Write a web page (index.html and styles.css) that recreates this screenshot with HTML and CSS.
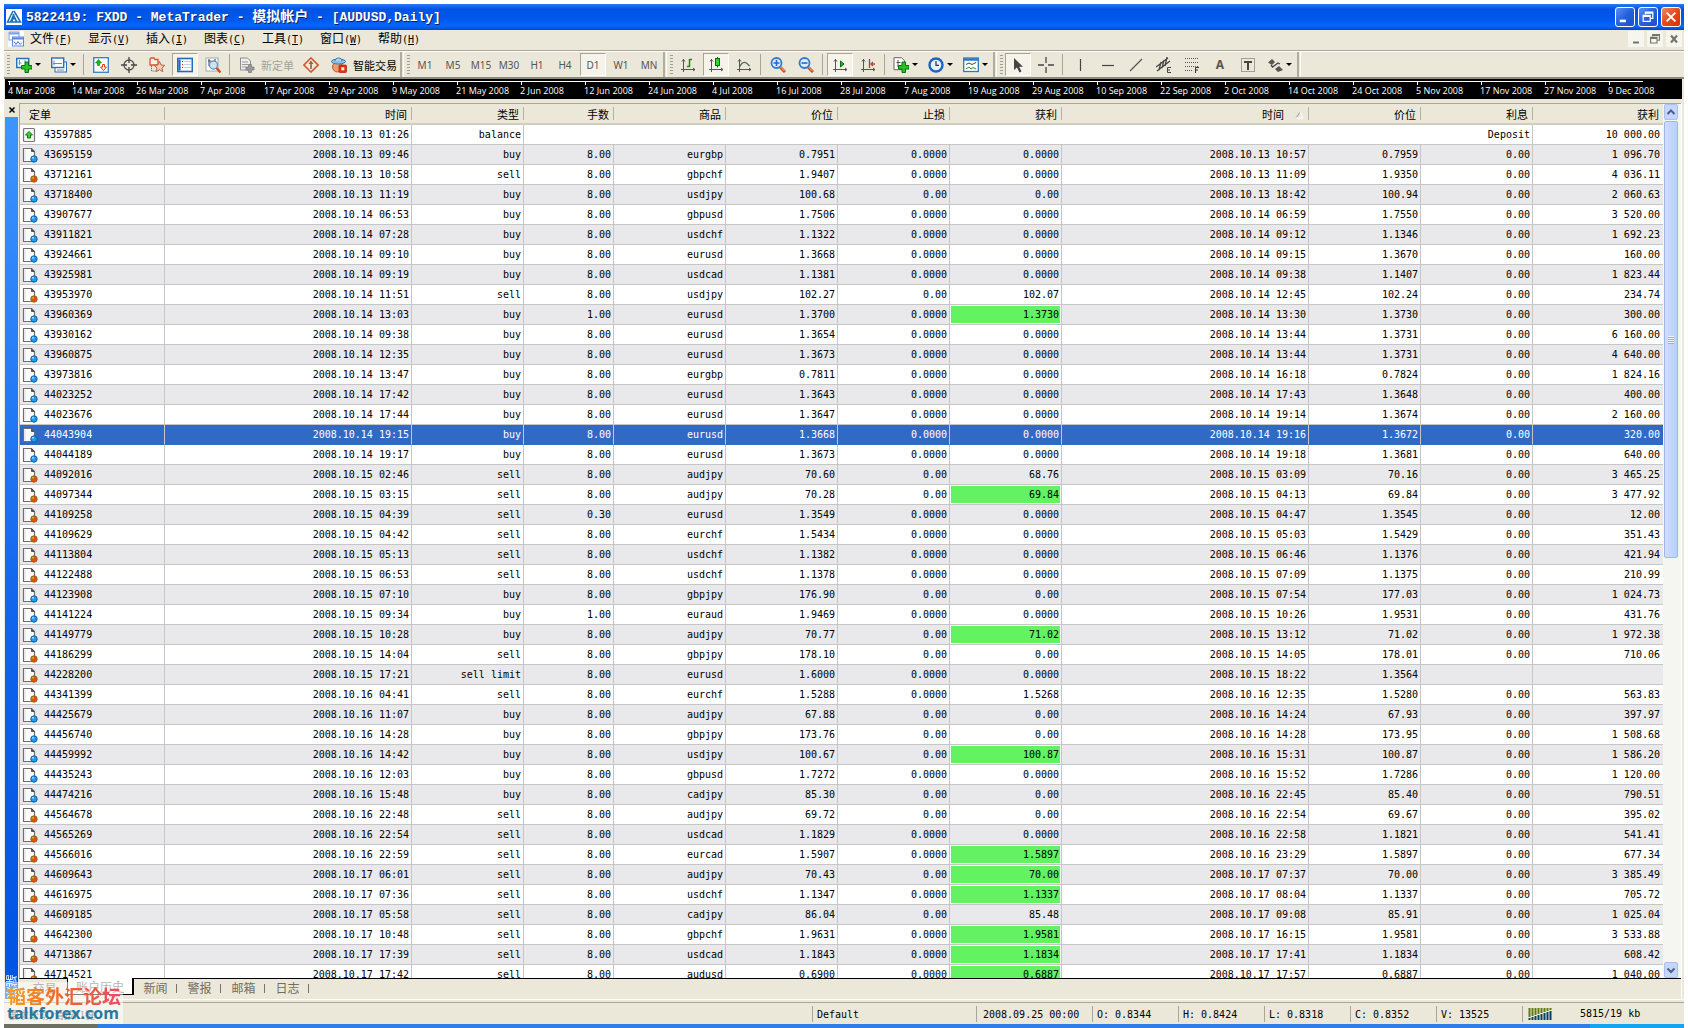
FILE: index.html
```html
<!DOCTYPE html>
<html lang="zh-CN">
<head>
<meta charset="utf-8">
<title>5822419: FXDD - MetaTrader</title>
<link rel="stylesheet" href="styles.css">
</head>
<body>
<svg class="defs" aria-hidden="true">
  <symbol id="doc" viewBox="0 0 16 16">
    <path d="M1.5 1.5h8l3 3v10h-11z" fill="#fff" stroke="#6e6e70" stroke-width="1.2"/>
    <path d="M9.5 1.5v3h3z" fill="#555" stroke="#555"/>
    <path d="M3 13V3" stroke="#ddd"/>
  </symbol>
  <symbol id="buy" viewBox="0 0 16 16">
    <use href="#doc"/><circle cx="12" cy="12" r="3.2" fill="#1d9bf0" stroke="#0b5fa4"/><circle cx="11" cy="10.800" r="1" fill="#a9dcff"/>
  </symbol>
  <symbol id="sell" viewBox="0 0 16 16">
    <use href="#doc"/><circle cx="12" cy="12" r="3.2" fill="#f2490c" stroke="#8a6a18"/><circle cx="11" cy="10.800" r="1" fill="#8fd04a"/>
  </symbol>
  <symbol id="balance" viewBox="0 0 16 16">
    <rect x="1.5" y="1.5" width="11" height="13" rx="1" fill="#f4f4f4" stroke="#77777a" stroke-width="1.2"/>
    <path d="M7 4.5l3.5 3.5h-2v3h-3v-3h-2z" fill="#3fd03f" stroke="#0a7a0a"/>
  </symbol>
  <symbol id="axes" viewBox="0 0 16 16">
    <path d="M3.500 2v13M1 12.500h14M2 4.500l1.500-2 1.500 2M13 11l2 1.500-2 1.500" fill="none" stroke="#555"/>
  </symbol>
  <symbol id="cross" viewBox="0 0 16 16">
    <path d="M8 0v6M8 10v6M0 8h6M10 8h6" stroke="#444" stroke-width="1.300"/>
  </symbol>
  <symbol id="lens" viewBox="0 0 16 16">
    <path d="M10 10l5 5" stroke="#c4502a" stroke-width="3"/><path d="M10.500 10l4 4" stroke="#f5b79c"/>
    <circle cx="6.500" cy="6" r="5" fill="#dceeff" stroke="#2f7bd0" stroke-width="1.800"/>
  </symbol>
  <symbol id="plus" viewBox="0 0 16 16">
    <path d="M9 5h3.500v3.500H16V12h-3.500v3.500H9V12H5.500V8.500H9z" fill="#28c328" stroke="#087008"/>
  </symbol>
  <symbol id="restore" viewBox="0 0 16 16">
    <path d="M5 5V2.500h8.500v7H11M5 3.500h8" fill="none" stroke="currentColor" stroke-width="1.400"/>
    <path d="M2.500 6h8v7h-8zM2.500 7.300h8" fill="none" stroke="currentColor" stroke-width="1.400"/>
  </symbol>
</svg>

<div class="window">
  <header class="titlebar">
    <svg class="app-icon" viewBox="0 0 16 16"><rect width="16" height="16" fill="#fff"/><path d="M7 2L1.500 13h3L8 5M8 2l6.500 11H11L7 5M5.500 13L8 8l2.500 5z" fill="none" stroke="#1b6fb8" stroke-width="1.500"/></svg>
    <h1>5822419: FXDD - MetaTrader - <span class="cjk">模拟帐户</span> - [AUDUSD,Daily]</h1>
    <button class="win-btn" aria-label="最小化"><svg viewBox="0 0 16 16"><path d="M2 12.500h7" stroke="#fff" stroke-width="3"/></svg></button>
    <button class="win-btn" aria-label="还原"><svg viewBox="0 0 16 16"><use href="#restore"/></svg></button>
    <button class="win-btn close" aria-label="关闭"><svg viewBox="0 0 16 16"><path d="M3 3l10 10M13 3L3 13" stroke="#fff" stroke-width="2.200"/></svg></button>
  </header>

  <nav class="menubar">
    <svg class="doc-icon" viewBox="0 0 16 16"><rect x="1" y="1" width="10" height="8" fill="#fff" stroke="#7ba0e8"/><path d="M1 2.500h10" stroke="#7ba0e8" stroke-width="2"/><rect x="4.500" y="6" width="11" height="9" fill="#fff" stroke="#5d86d8"/><path d="M4.500 7.500h11" stroke="#5d86d8" stroke-width="2"/><path d="M6 10.500l2 3 2-3 2 3 2-2" fill="none" stroke="#3f6fd0"/></svg>
    <button>文件<small>(<u>F</u>)</small></button>
    <button>显示<small>(<u>V</u>)</small></button>
    <button>插入<small>(<u>I</u>)</small></button>
    <button>图表<small>(<u>C</u>)</small></button>
    <button>工具<small>(<u>T</u>)</small></button>
    <button>窗口<small>(<u>W</u>)</small></button>
    <button>帮助<small>(<u>H</u>)</small></button>
    <span class="spacer"></span>
    <button class="mdi" aria-label="最小化"><svg viewBox="0 0 16 16"><path d="M5 11.500h6" stroke="currentColor" stroke-width="2"/></svg></button>
    <button class="mdi" aria-label="还原"><svg viewBox="-2 -2 20 20"><use href="#restore" width="16" height="16"/></svg></button>
    <button class="mdi" aria-label="关闭"><svg viewBox="0 0 16 16"><path d="M5 4.500l6 7M11 4.500l-6 7" stroke="currentColor" stroke-width="2.200"/></svg></button>
  </nav>

  <div class="toolbars">
    <div class="toolbar">
      <span class="grip"></span>
      <button class="tool drop" aria-label="新图表"><svg viewBox="0 0 16 16"><rect x=".7" y="1.500" width="12" height="9" fill="#fff" stroke="#2c6fb5" stroke-width="1.500"/><path d="M3.500 3v5M2.500 6h3M8 4h2" stroke="#6b8fb5"/><use href="#plus"/></svg></button>
      <button class="tool drop" aria-label="图表窗口"><svg viewBox="0 0 16 16"><rect x="4" y="5" width="11.500" height="10" fill="#fff" stroke="#2c6fb5"/><rect x=".7" y="1" width="12" height="9.500" fill="#fff" stroke="#2c6fb5" stroke-width="1.400"/><path d="M3 3.500v5M2 6.500h9M6 13h7" stroke="#6b8fb5"/></svg></button>
      <span class="sep"></span>
      <button class="tool" aria-label="市场报价"><svg viewBox="0 0 16 16"><rect x=".7" y=".7" width="14.600" height="14.600" fill="#fff" stroke="#3c86cf" stroke-width="1.400"/><path d="M5.500 2.500L2.500 6h2v2.500h2V6h2z" fill="#22b322" stroke="#0a7a0a" stroke-width=".6"/><path d="M10.500 13.500l3-3.500h-2V7.500h-2V10h-2z" fill="#fff" stroke="#e03c0c"/></svg></button>
      <button class="tool" aria-label="数据窗口"><svg viewBox="0 0 16 16"><circle cx="8" cy="8" r="5" fill="none" stroke="#555" stroke-width="1.300"/><path d="M8 0v6M8 10v6M0 8h6M10 8h6" stroke="#444" stroke-width="1.300"/></svg></button>
      <button class="tool" aria-label="导航"><svg viewBox="0 0 16 16"><path d="M1 8V2l1-1h3l1 1.500h3V8z" fill="#fff0e8" stroke="#d9532c" stroke-width="1.300"/><path d="M2.500 9v5h4" stroke="#555" stroke-dasharray="1 1" fill="none"/><path d="M10.500 4.500l1.600 3.500 3.700.4-2.800 2.500.8 3.800-3.300-2-3.300 2 .8-3.800-2.800-2.500 3.700-.4z" fill="#f5cdb5" stroke="#a85a3c" stroke-width=".9"/></svg></button>
      <button class="tool pressed" aria-label="终端"><svg viewBox="0 0 16 16"><rect x=".7" y="1.500" width="14.600" height="13" fill="#fff" stroke="#1f6cbf" stroke-width="1.600"/><path d="M2.500 2.500v11" stroke="#1f6cbf" stroke-width="2.200"/><path d="M5 4.500h1M5 7.500h1M5 10.500h1" stroke="#d02020"/><path d="M7 4.500h7M7 7.500h7M7 10.500h7" stroke="#b7d3f2"/></svg></button>
      <button class="tool" aria-label="策略测试"><svg viewBox="0 0 16 16"><rect x="1" y="1" width="12" height="13" fill="#fff" stroke="#9aa9b8"/><path d="M4 2v7M3 4h3M10 2v5" stroke="#444"/><circle cx="8.500" cy="8" r="4" fill="#cfe4fa" stroke="#6f93bd" stroke-width="1.300"/><path d="M11.500 11l4 4.500" stroke="#d8481c" stroke-width="2.300"/></svg></button>
      <span class="sep"></span>
      <button class="tool text muted"><svg viewBox="0 0 16 16"><path d="M1.500 1h7l3 3v9h-10z" fill="#eee" stroke="#8b8b8b"/><path d="M3 5h6M3 7.500h6M3 10h4" stroke="#999"/><path d="M9.500 7.500h3V10H15v3h-2.500v2.500h-3V13H7v-3h2.500z" fill="#999" stroke="#777" stroke-width=".7"/></svg>新定单</button>
      <button class="tool" aria-label="编辑器"><svg viewBox="0 0 16 16"><rect x="3" y="3" width="10" height="10" transform="rotate(45 8 8)" fill="#f3e7d6" stroke="#d2532d" stroke-width="1.500"/><path d="M8 3.500L5.500 7h1.700v5h1.600V7h1.700z" fill="#8b6a45"/></svg></button>
      <button class="tool text"><svg viewBox="0 0 16 16"><circle cx="6.500" cy="10" r="5" fill="#f39b70" stroke="#c25526"/><ellipse cx="7.500" cy="4.500" rx="7" ry="2.500" fill="#8ac1ec" stroke="#3579b5"/><path d="M4 4c0-4 7-4 7 0" fill="#a5d2f5" stroke="#3579b5"/><rect x="8" y="8" width="7.500" height="7.500" rx="1" fill="#ec2f0a" stroke="#a81f05" stroke-width=".7"/><rect x="10.300" y="10.300" width="3" height="3" fill="#fff"/></svg>智能交易</button>
      <span class="edge"></span>
    </div>
    <div class="toolbar">
      <span class="grip"></span>
      <button class="tool tf">M1</button><button class="tool tf">M5</button><button class="tool tf">M15</button><button class="tool tf">M30</button><button class="tool tf">H1</button><button class="tool tf">H4</button><button class="tool tf pressed">D1</button><button class="tool tf">W1</button><button class="tool tf">MN</button>
      <span class="edge"></span>
    </div>
    <div class="toolbar">
      <span class="grip"></span>
      <button class="tool" aria-label="柱状图"><svg viewBox="0 0 16 16"><use href="#axes"/><path d="M9.500 2v8M7 9.500h2.500M9.500 2.500H12" stroke="#109010" stroke-width="1.500"/></svg></button>
      <button class="tool pressed" aria-label="蜡烛图"><svg viewBox="0 0 16 16"><use href="#axes"/><path d="M9.500 0v10.500" stroke="#087008"/><rect x="7.500" y="1.500" width="4" height="7" fill="#2ed32e" stroke="#087008"/></svg></button>
      <button class="tool" aria-label="折线图"><svg viewBox="0 0 16 16"><use href="#axes"/><path d="M3.500 10c3-6 6-6 10-1" fill="none" stroke="#4a6a4a" stroke-width="1.300"/></svg></button>
      <span class="sep"></span>
      <button class="tool" aria-label="放大"><svg viewBox="0 0 16 16"><use href="#lens"/><path d="M3.500 6h6M6.500 3v6" stroke="#2468c0" stroke-width="1.600"/></svg></button>
      <button class="tool" aria-label="缩小"><svg viewBox="0 0 16 16"><use href="#lens"/><path d="M3.500 6h6" stroke="#2468c0" stroke-width="1.600"/></svg></button>
      <span class="sep"></span>
      <button class="tool pressed" aria-label="自动滚动"><svg viewBox="0 0 16 16"><use href="#axes"/><path d="M8.500 4v6l3.500-3z" fill="#22b322" stroke="#087008"/></svg></button>
      <button class="tool" aria-label="图表平移"><svg viewBox="0 0 16 16"><use href="#axes"/><path d="M9.500 2v9" stroke="#2468c0" stroke-width="1.300"/><path d="M15 7h-4M13 5l-2 2 2 2" stroke="#c8461a" stroke-width="1.300" fill="none"/></svg></button>
      <span class="sep"></span>
      <button class="tool drop" aria-label="指标"><svg viewBox="0 0 16 16"><path d="M1 .7h7.500l3 3v9H1z" fill="#fff" stroke="#666"/><path d="M5 3v7M3.500 5.500h4" stroke="#555"/><use href="#plus"/></svg></button>
      <button class="tool drop" aria-label="周期"><svg viewBox="0 0 16 16"><circle cx="8" cy="8" r="6.500" fill="#e4f2ff" stroke="#1e62c4" stroke-width="2.400"/><path d="M8 4v4.300h3" fill="none" stroke="#333" stroke-width="1.200"/></svg></button>
      <button class="tool drop" aria-label="模板"><svg viewBox="0 0 16 16"><rect x=".7" y="1" width="14.600" height="13.500" fill="#fff" stroke="#2c78c4" stroke-width="1.300"/><path d="M1 2.500h14" stroke="#2c78c4" stroke-width="2.500"/><path d="M3 7.500l3-1.500 3 1.500 4-2" stroke="#444" fill="none"/><path d="M3 12l3-2 2 2 2-1.500 3 1.500" stroke="#1b9a1b" fill="none"/></svg></button>
      <span class="edge"></span>
    </div>
    <div class="toolbar">
      <span class="grip"></span>
      <button class="tool pressed" aria-label="光标"><svg viewBox="0 0 16 16"><path d="M4 1v12l3-2.500 2.500 5 2-1-2.300-4.700H13z" fill="#444"/></svg></button>
      <button class="tool" aria-label="十字准线"><svg viewBox="0 0 16 16"><use href="#cross"/></svg></button>
      <span class="sep"></span>
      <button class="tool" aria-label="垂直线"><svg viewBox="0 0 16 16"><path d="M8.500 2v12" stroke="#444" stroke-width="1.200"/></svg></button>
      <button class="tool" aria-label="水平线"><svg viewBox="0 0 16 16"><path d="M2 8.500h12" stroke="#444" stroke-width="1.200"/></svg></button>
      <button class="tool" aria-label="趋势线"><svg viewBox="0 0 16 16"><path d="M2 14L14 2" stroke="#555" stroke-width="1.200"/></svg></button>
      <button class="tool" aria-label="等距通道"><svg viewBox="0 0 16 16"><path d="M0 10L12 1M1 14L14 4M3 13l2-8M6 11l2-8M9 9l2-9" stroke="#444" stroke-width="1.300"/><path d="M15 10.500h-3.500v5H15M11.500 13H14" fill="none" stroke="#444"/></svg></button>
      <button class="tool" aria-label="斐波纳契"><svg viewBox="0 0 16 16"><path d="M1 1.500h14M1 5.500h14M1 9.500h14M1 13.500h8" stroke="#555" stroke-dasharray="1 1"/><path d="M15 10.500h-3.500v5.500M11.500 13H14" fill="none" stroke="#333"/></svg></button>
      <button class="tool letter">A</button>
      <button class="tool" aria-label="文字标签"><svg viewBox="0 0 16 16"><rect x="1.500" y="1.500" width="13" height="13" fill="none" stroke="#555" stroke-dasharray="1 1"/><path d="M4 5h8M8 5v8" stroke="#444" stroke-width="2"/></svg></button>
      <button class="tool drop" aria-label="箭头"><svg viewBox="0 0 16 16"><path d="M5 2L1 5.500 5 8l3-3zM12 9l-4 3 3 3 5-2z" fill="#555"/><path d="M4 8l1.500 2L11 6l2 1" fill="none" stroke="#444" stroke-width="1.300"/></svg></button>
      <span class="edge"></span>
    </div>
  </div>

  <div class="timeline"><ol id="axis"></ol></div>

  <main class="terminal">
    <div class="dock">
      <button aria-label="关闭"><svg viewBox="0 0 8 8"><path d="M1.500 1.500l5 5M6.500 1.500l-5 5" stroke="#000" stroke-width="1.500"/></svg></button>
      <div class="dock-title">终端</div>
    </div>
    <div class="content">
      <div class="history">
        <div class="viewport">
          <table>
            <colgroup><col class="c-order"><col class="c-time"><col><col class="c-lots"><col><col><col><col><col class="c-time"><col><col><col class="c-profit"></colgroup>
            <thead><tr><th>定单</th><th>时间</th><th>类型</th><th>手数</th><th>商品</th><th>价位</th><th>止损</th><th>获利</th><th>时间<svg class="sort" viewBox="0 0 10 8"><path d="M2 7L6 1" stroke="#999"/><path d="M6 1l3 6H2" stroke="#fff" fill="none"/></svg></th><th>价位</th><th>利息</th><th>获利</th></tr></thead>
            <tbody id="rows"></tbody>
          </table>
        </div>
        <div class="scrollbar">
          <button aria-label="向上"><svg viewBox="0 0 10 10"><path d="M1.500 7L5 3.500 8.500 7" fill="none" stroke="#4d6185" stroke-width="2"/></svg></button>
          <div class="thumb"></div>
          <button class="down" aria-label="向下"><svg viewBox="0 0 10 10"><path d="M1.500 3.500L5 7l3.500-3.500" fill="none" stroke="#4d6185" stroke-width="2"/></svg></button>
        </div>
      </div>
      <div class="tabs">
        <button>交易</button><button class="active">账户历史</button><button>新闻</button><button>警报</button><button>邮箱</button><button>日志</button>
      </div>
    </div>
  </main>

  <footer class="status">
    <span class="help">要求帮助, 请按F1键</span>
    <span class="profile">Default</span>
    <span class="date">2008.09.25 00:00</span>
    <span>O: 0.8344</span><span>H: 0.8424</span><span>L: 0.8318</span><span>C: 0.8352</span><span>V: 13525</span>
    <span class="net"><svg viewBox="0 0 24 12"><path d="M1.500 0v9M4.500 0v8M7.500 0v7M10.500 0v6M13.500 0v5M16.500 0v4M19.500 0v3M22.500 0v2" stroke="#5f7a10" stroke-width="2"/><path d="M1.500 10v2M4.500 9v3M7.500 8v4M10.500 7v5M13.500 6v6M16.500 5v7M19.500 4v8M22.500 3v9" stroke="#0c3f66" stroke-width="2"/></svg>5815/19 kb</span>
  </footer>
  <div class="taskbar"></div>
  <div class="watermark"><strong>韬客外汇论坛</strong><b>talkforex.com</b></div>
</div>
<script src="history.js"></script>
</body>
</html>
```

FILE: styles.css
```css
* { box-sizing: border-box; }
body {
  margin: 0;
  height: 100vh;
  padding: 4px 4px 0;
  background: #fefefc;
  color: #000;
  font-family: "DejaVu Sans Mono", "Noto Sans CJK SC", monospace;
  font-size: 10px;
}
button {
  margin: 0;
  padding: 0;
  border: 0;
  background: none;
  color: inherit;
  font: inherit;
}
svg { display: block; flex: none; }
.defs { position: absolute; width: 0; height: 0; }

.window {
  position: relative;
  display: flex;
  flex-direction: column;
  height: 100%;
  background: #ebe8da;
}

/* title bar */
.titlebar {
  display: flex;
  align-items: center;
  gap: 3px;
  height: 26px;
  flex: none;
  padding: 0 3px 0 2px;
  background: linear-gradient(#2a7af5, #0054e3 20%, #0058ee 60%, #0468fc 85%, #0048c8);
}
.app-icon { width: 16px; height: 16px; }
h1 {
  flex: 1;
  margin: 0 0 0 1px;
  color: #fff;
  font: bold 13px/20px "Liberation Mono", "Noto Sans CJK SC", monospace;
  white-space: nowrap;
  text-shadow: 1px 1px #0a246a;
}
.cjk { font-size: 14px; }
.win-btn {
  display: grid;
  place-items: center;
  width: 20px;
  height: 20px;
  border: 1px solid #fff;
  border-radius: 3px;
  background: linear-gradient(135deg, #5a92f5, #2560dd 50%, #1c50c8);
  color: #fff;
}
.win-btn svg { width: 14px; height: 14px; }
.close { background: linear-gradient(135deg, #ee8a68, #e64a1a 50%, #cf3604); }

/* menu */
.menubar {
  display: flex;
  align-items: center;
  height: 21px;
  flex: none;
  padding: 0 2px 2px 4px;
  border-bottom: 1px solid #a9a695;
}
.doc-icon { width: 16px; height: 16px; margin-right: 2px; background: #fff; }
.menubar button {
  width: 58px;
  padding-left: 4px;
  font-family: "Noto Sans CJK SC", sans-serif;
  font-size: 12px;
  line-height: 18px;
  text-align: left;
}
.menubar small { font-family: "DejaVu Sans Mono", monospace; font-size: 10px; }
.spacer { flex: 1; }
.menubar .mdi {
  width: 16px;
  height: 16px;
  margin-left: 3px;
  padding: 0;
  background: #f6f5ee;
  color: #77756a;
}

/* toolbars */
.toolbars {
  display: flex;
  height: 28px;
  flex: none;
  border-top: 1px solid #fff;
  border-bottom: 2px solid #8b897c;
}
.toolbar { display: flex; align-items: center; height: 25px; }
.grip {
  width: 3px;
  height: 19px;
  margin: 0 1px 0 3px;
  background: repeating-linear-gradient(#a19e8d 0 1px, #ebe8da 1px 3px);
}
.tool {
  display: flex;
  align-items: center;
  justify-content: center;
  width: 28px;
  height: 23px;
}
.tool svg { width: 16px; height: 16px; }
.drop { width: 35px; gap: 3px; }
.drop::after {
  content: "";
  border: 3px solid transparent;
  border-top-color: #000;
  border-bottom: 0;
}
.pressed {
  width: 26px;
  margin: 0 1px;
  border: 1px solid #a8a595;
  border-right-color: #fff;
  border-bottom-color: #fff;
  background: #f5f3ea;
}
.text {
  width: auto;
  gap: 6px;
  padding: 0 3px 0 6px;
  font-family: "Noto Sans CJK SC", sans-serif;
  font-size: 11px;
  white-space: nowrap;
}
.muted { color: #a5a296; }
.sep { width: 6px; height: 21px; background: linear-gradient(#a8a595, #a8a595) 2px 0 / 1px 100% no-repeat; }
.edge { width: 4px; height: 25px; border-left: 2px solid #b0ad9c; border-right: 1px solid #fff; }
.tf { color: #555; font-family: "Noto Sans", sans-serif; font-size: 10px; }
.letter { color: #555; font: bold 12px "Noto Sans", sans-serif; }

/* time axis */
.timeline {
  height: 20px;
  flex: none;
  margin: 0 2px 0 1px;
  padding: 2px 39px 0 3px;
  background: #000;
}
.timeline ol {
  display: flex;
  margin: 0;
  padding: 0;
  border-top: 1px solid #fff;
  list-style: none;
}
.timeline li {
  flex: 0 0 64px;
  padding-top: 1px;
  color: #fff;
  font: 9px/15px "Open Sans", sans-serif;
  white-space: nowrap;
  background: linear-gradient(#fff, #fff) 1px 0 / 1px 3px no-repeat;
}

/* terminal */
.terminal {
  display: flex;
  flex: 1;
  min-height: 0;
  margin-top: 4px;
  padding: 0 2px 0 1px;
  border-bottom: 1px solid #fff;
}
.dock { display: flex; flex-direction: column; width: 13px; flex: none; margin-right: 1px; }
.dock button { display: grid; place-items: center; height: 14px; }
.dock button svg { width: 8px; height: 8px; }
.dock-title {
  display: flex;
  align-items: center;
  flex: 1;
  background: linear-gradient(#0054e3, #0f62ec 40%, #3c95ff);
  color: #fff;
  font: 12px/13px "Noto Sans CJK SC", sans-serif;
  writing-mode: vertical-rl;
  transform: rotate(180deg);
}
.content {
  display: flex;
  flex-direction: column;
  flex: 1;
  min-width: 0;
  border-right: 1px solid #fff;
}
.history {
  display: flex;
  flex: 1;
  min-height: 0;
  border: 1px solid #aba898;
  border-right: 0;
  border-bottom-color: #000;
}
.viewport { flex: 1; min-width: 0; overflow: hidden; background: #fff; }
table { width: 100%; border-collapse: separate; border-spacing: 0; table-layout: fixed; }
col { width: 112px; }
.c-order { width: 145px; }
.c-time { width: 247px; }
.c-lots { width: 90px; }
.c-profit { width: 131px; }
th {
  height: 21px;
  padding: 0 5px;
  border-bottom: 2px solid #d2cebd;
  background: linear-gradient(#b5b2a2, #b5b2a2) 100% 3px / 1px 13px no-repeat #ebe8da;
  font: 11px/18px "Noto Sans CJK SC", sans-serif;
  text-align: right;
  white-space: nowrap;
}
th:first-child { padding-left: 9px; text-align: left; }
.sort { display: inline-block; width: 10px; height: 8px; margin-left: 10px; }
td {
  height: 20px;
  padding: 0 2px;
  border-right: 1px solid #c6c5c8;
  border-bottom: 1px solid #c6c5c8;
  line-height: 19px;
  text-align: right;
  white-space: pre;
}
td:first-child { text-align: left; }
td:last-child { padding-right: 4px; border-right: 0; }
td svg { display: inline-block; width: 16px; height: 16px; margin-right: 6px; vertical-align: middle; }
tr:nth-child(even) td { background: #e9e8ea; }
tbody .hit, tbody tr:nth-child(even) .hit { background: #62f262; box-shadow: inset 0 0 0 1px #f4fbf4; }
tbody tr.selected td { background: #316ac5; border-bottom-color: #316ac5; color: #fff; }

.scrollbar { display: flex; flex-direction: column; width: 18px; flex: none; padding: 0 3px 0 1px; background: #f5f5f2; }
.scrollbar button {
  display: grid;
  place-items: center;
  height: 16px;
  border: 1px solid #a9c0f2;
  border-radius: 2px;
  background: #c5d5fc;
}
.scrollbar svg { width: 10px; height: 10px; }
.thumb {
  height: 50%;
  margin-top: 1px;
  border: 1px solid #9db7ee;
  border-radius: 2px;
  background:
    repeating-linear-gradient(#eef4fe 0 1px, #8cb0f8 1px 2px) center / 6px 8px no-repeat,
    linear-gradient(90deg, #d0dcff, #b9d0fb);
}
.down { margin-top: auto; }

.tabs { display: flex; height: 20px; flex: none; }
.tabs button {
  width: 44px;
  height: 16px;
  border-right: 1px solid transparent;
  background: linear-gradient(#77756a, #77756a) 100% 5px / 1px 9px no-repeat;
  color: #6f6d65;
  font: 12px/17px "Noto Sans CJK SC", sans-serif;
}
.tabs button:first-child { width: 48px; padding-left: 4px; background: none; }
.tabs .active {
  width: 67px;
  height: 17px;
  margin-top: -1px;
  border: 1px solid #000;
  border-width: 0 2px 1px 1px;
  background: #fefefc;
}

/* status bar */
.status { display: flex; align-items: center; height: 22px; flex: none; margin-top: 2px; border-top: 1px solid #a9a695; }
.status span { width: 86px; height: 16px; padding-left: 4px; border-left: 1px solid #a9a695; line-height: 17px; white-space: nowrap; }
.status .help { flex: 1; padding-left: 5px; border: 0; color: #555; font-family: "Noto Sans CJK SC", sans-serif; }
.status .profile { width: 164px; }
.status .date { width: 116px; padding-left: 6px; }
.status .net { display: flex; align-items: center; gap: 28px; width: 162px; padding-left: 5px; }
.net svg { width: 24px; height: 12px; }

.taskbar { height: 4px; flex: none; background: linear-gradient(90deg, #6d6f62 0 94px, #2f7de8 94px calc(100% - 94px), #14a5f0 calc(100% - 94px)); }

.watermark {
  position: absolute;
  left: 0;
  bottom: 4px;
  width: 119px;
  height: 42px;
  padding: 4px 0 0 3px;
  background: rgba(255, 255, 255, .5);
  white-space: nowrap;
}
.watermark strong, .watermark b { display: block; }
.watermark strong {
  background: linear-gradient(90deg, #f5a020, #f0622a 50%, #f04868);
  background-clip: text;
  color: transparent;
  font: bold 19px/19px "Noto Sans CJK SC", sans-serif;
}
.watermark b { color: #2878a0; font: bold 16px/17px "Open Sans", sans-serif; }
```

FILE: history.js
```js
const dates = ["4 Mar", "14 Mar", "26 Mar", "7 Apr", "17 Apr", "29 Apr", "9 May", "21 May", "2 Jun", "12 Jun", "24 Jun", "4 Jul", "16 Jul", "28 Jul", "7 Aug", "19 Aug", "29 Aug", "10 Sep", "22 Sep", "2 Oct", "14 Oct", "24 Oct", "5 Nov", "17 Nov", "27 Nov", "9 Dec"];
document.getElementById("axis").innerHTML = dates.map(d => `<li>${d} 2008</li>`).join("");

// order|open time|type|lots|symbol|open price|stop|target|close time|close price|swap|profit ("*" marks a target that was hit)
const orders = `43695159|13 09:46|buy|8.00|eurgbp|0.7951|0.0000|0.0000|13 10:57|0.7959|0.00|1 096.70
43712161|13 10:58|sell|8.00|gbpchf|1.9407|0.0000|0.0000|13 11:09|1.9350|0.00|4 036.11
43718400|13 11:19|buy|8.00|usdjpy|100.68|0.00|0.00|13 18:42|100.94|0.00|2 060.63
43907677|14 06:53|buy|8.00|gbpusd|1.7506|0.0000|0.0000|14 06:59|1.7550|0.00|3 520.00
43911821|14 07:28|buy|8.00|usdchf|1.1322|0.0000|0.0000|14 09:12|1.1346|0.00|1 692.23
43924661|14 09:10|buy|8.00|eurusd|1.3668|0.0000|0.0000|14 09:15|1.3670|0.00|160.00
43925981|14 09:19|buy|8.00|usdcad|1.1381|0.0000|0.0000|14 09:38|1.1407|0.00|1 823.44
43953970|14 11:51|sell|8.00|usdjpy|102.27|0.00|102.07|14 12:45|102.24|0.00|234.74
43960369|14 13:03|buy|1.00|eurusd|1.3700|0.0000|*1.3730|14 13:30|1.3730|0.00|300.00
43930162|14 09:38|buy|8.00|eurusd|1.3654|0.0000|0.0000|14 13:44|1.3731|0.00|6 160.00
43960875|14 12:35|buy|8.00|eurusd|1.3673|0.0000|0.0000|14 13:44|1.3731|0.00|4 640.00
43973816|14 13:47|buy|8.00|eurgbp|0.7811|0.0000|0.0000|14 16:18|0.7824|0.00|1 824.16
44023252|14 17:42|buy|8.00|eurusd|1.3643|0.0000|0.0000|14 17:43|1.3648|0.00|400.00
44023676|14 17:44|buy|8.00|eurusd|1.3647|0.0000|0.0000|14 19:14|1.3674|0.00|2 160.00
44043904|14 19:15|buy|8.00|eurusd|1.3668|0.0000|0.0000|14 19:16|1.3672|0.00|320.00
44044189|14 19:17|buy|8.00|eurusd|1.3673|0.0000|0.0000|14 19:18|1.3681|0.00|640.00
44092016|15 02:46|sell|8.00|audjpy|70.60|0.00|68.76|15 03:09|70.16|0.00|3 465.25
44097344|15 03:15|sell|8.00|audjpy|70.28|0.00|*69.84|15 04:13|69.84|0.00|3 477.92
44109258|15 04:39|sell|0.30|eurusd|1.3549|0.0000|0.0000|15 04:47|1.3545|0.00|12.00
44109629|15 04:42|sell|8.00|eurchf|1.5434|0.0000|0.0000|15 05:03|1.5429|0.00|351.43
44113804|15 05:13|sell|8.00|usdchf|1.1382|0.0000|0.0000|15 06:46|1.1376|0.00|421.94
44122488|15 06:53|sell|8.00|usdchf|1.1378|0.0000|0.0000|15 07:09|1.1375|0.00|210.99
44123908|15 07:10|buy|8.00|gbpjpy|176.90|0.00|0.00|15 07:54|177.03|0.00|1 024.73
44141224|15 09:34|buy|1.00|euraud|1.9469|0.0000|0.0000|15 10:26|1.9531|0.00|431.76
44149779|15 10:28|buy|8.00|audjpy|70.77|0.00|*71.02|15 13:12|71.02|0.00|1 972.38
44186299|15 14:04|sell|8.00|gbpjpy|178.10|0.00|0.00|15 14:05|178.01|0.00|710.06
44228200|15 17:21|sell limit|8.00|eurusd|1.6000|0.0000|0.0000|15 18:22|1.3564||
44341399|16 04:41|sell|8.00|eurchf|1.5288|0.0000|1.5268|16 12:35|1.5280|0.00|563.83
44425679|16 11:07|buy|8.00|audjpy|67.88|0.00|0.00|16 14:24|67.93|0.00|397.97
44456740|16 14:28|buy|8.00|gbpjpy|173.76|0.00|0.00|16 14:28|173.95|0.00|1 508.68
44459992|16 14:42|buy|8.00|usdjpy|100.67|0.00|*100.87|16 15:31|100.87|0.00|1 586.20
44435243|16 12:03|buy|8.00|gbpusd|1.7272|0.0000|0.0000|16 15:52|1.7286|0.00|1 120.00
44474216|16 15:48|buy|8.00|cadjpy|85.30|0.00|0.00|16 22:45|85.40|0.00|790.51
44564678|16 22:48|sell|8.00|audjpy|69.72|0.00|0.00|16 22:54|69.67|0.00|395.02
44565269|16 22:54|sell|8.00|usdcad|1.1829|0.0000|0.0000|16 22:58|1.1821|0.00|541.41
44566016|16 22:59|sell|8.00|eurcad|1.5907|0.0000|*1.5897|16 23:29|1.5897|0.00|677.34
44609643|17 06:01|sell|8.00|audjpy|70.43|0.00|*70.00|17 07:37|70.00|0.00|3 385.49
44616975|17 07:36|sell|8.00|usdchf|1.1347|0.0000|*1.1337|17 08:04|1.1337|0.00|705.72
44609185|17 05:58|sell|8.00|cadjpy|86.04|0.00|85.48|17 09:08|85.91|0.00|1 025.04
44642300|17 10:48|sell|8.00|gbpchf|1.9631|0.0000|*1.9581|17 16:15|1.9581|0.00|3 533.88
44713867|17 17:39|sell|8.00|usdcad|1.1843|0.0000|*1.1834|17 17:41|1.1834|0.00|608.42
44714521|17 17:42|sell|8.00|audusd|0.6900|0.0000|*0.6887|17 17:57|0.6887|0.00|1 040.00`;

const icon = id => `<svg aria-hidden="true"><use href="#${id}"/></svg>`;
const rows = orders.split("\n").map(line => {
  const f = line.split("|");
  const cells = f.map((v, i) => {
    if (i === 0) return `<td>${icon(f[2] === "buy" ? "buy" : "sell")}${v}</td>`;
    if (i === 1 || i === 8) return `<td>2008.10.${v}</td>`;
    if (v[0] === "*") return `<td class="hit">${v.slice(1)}</td>`;
    return `<td>${v}</td>`;
  });
  return `<tr${f[0] === "44043904" ? ' class="selected"' : ""}>${cells.join("")}</tr>`;
});
rows.unshift(`<tr><td>${icon("balance")}43597885</td><td>2008.10.13 01:26</td><td>balance</td><td colspan="8">Deposit</td><td>10 000.00</td></tr>`);
document.getElementById("rows").innerHTML = rows.join("");
```
